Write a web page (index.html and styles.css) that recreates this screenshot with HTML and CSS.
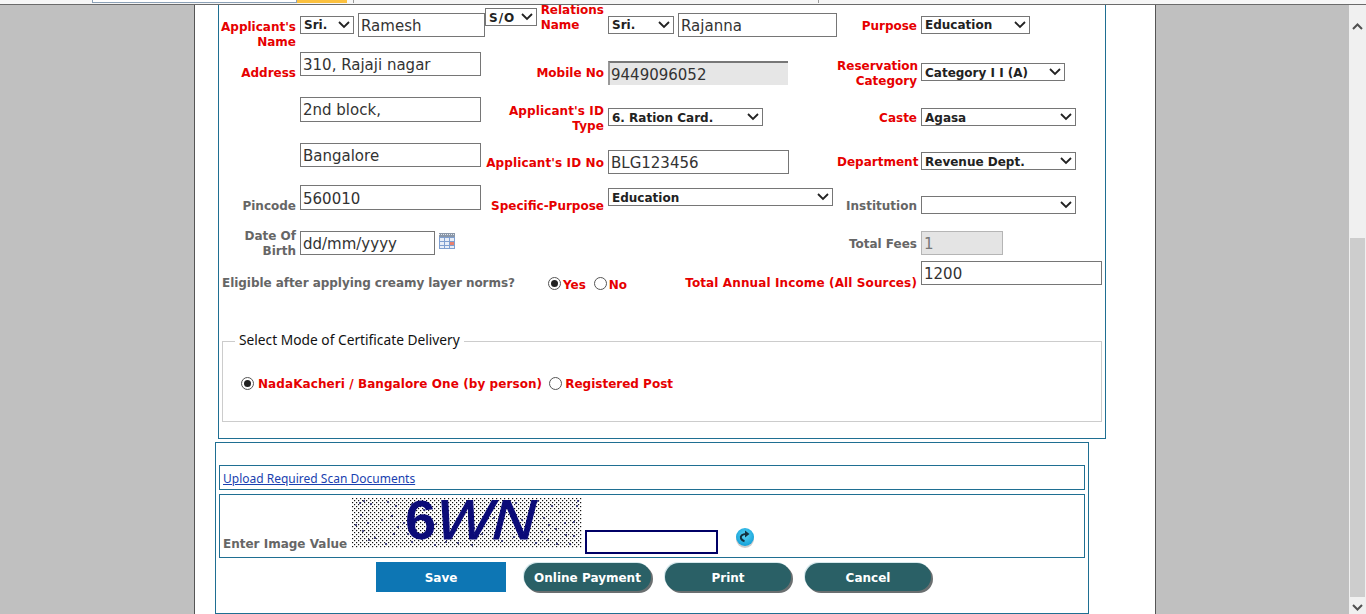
FILE: index.html
```html
<!DOCTYPE html>
<html lang="en">
<head>
<meta charset="utf-8">
<title>Application Form</title>
<link rel="stylesheet" href="styles.css">
</head>
<body>
<div class="strip">
  <span class="strip-field"></span>
  <span class="strip-tab"></span>
  <span class="strip-tick first"></span>
  <span class="strip-tick second"></span>
</div>
<div class="app">
  <div class="canvas">
    <div class="page">
      <form class="main-box">
        <div class="grid">
          <div class="lab t19">Applicant's Name</div>
          <div class="span-name">
            <select class="sel t16 w54"><option>Sri.</option></select>
            <input class="inp t13 w127 ml4" value="Ramesh">
            <select class="sel t8 w52 so"><option>S/O</option></select>
            <div class="lab t2 push left">Relations<br>Name</div>
          </div>
          <div class="flexcell">
            <select class="sel t16 w66"><option>Sri.</option></select>
            <input class="inp t13 w159 ml4" value="Rajanna">
          </div>
          <div class="lab t18">Purpose</div>
          <div><select class="sel t16 w109"><option>Education</option></select></div>

          <div class="lab t15">Address</div>
          <div><input class="inp t2 w181" value="310, Rajaji nagar"></div>
          <div class="lab t15">Mobile No</div>
          <div><input class="inp t11 w180 ro" value="9449096052" readonly></div>
          <div class="lab t8">Reservation Category</div>
          <div><select class="sel t13 w144"><option>Category I I (A)</option></select></div>

          <div></div>
          <div><input class="inp t2 w181 h25 snug" value="2nd block,"></div>
          <div class="lab t8 wide">Applicant's ID Type</div>
          <div><select class="sel t13 w155"><option>6. Ration Card.</option></select></div>
          <div class="lab t15">Caste</div>
          <div><select class="sel t13 w155"><option>Agasa</option></select></div>

          <div></div>
          <div><input class="inp t2 w181" value="Bangalore"></div>
          <div class="lab t14 wide">Applicant's ID No</div>
          <div><input class="inp t9 w181" value="BLG123456"></div>
          <div class="lab t13">Department</div>
          <div><select class="sel t11 w155"><option>Revenue Dept.</option></select></div>

          <div class="lab grey t14">Pincode</div>
          <div><input class="inp t1 w181 h25" value="560010"></div>
          <div class="lab t14">Specific-Purpose</div>
          <div><select class="sel t4 w225"><option>Education</option></select></div>
          <div class="lab grey t14">Institution</div>
          <div><select class="sel t12 w155"><option></option></select></div>

          <div class="lab grey dob">Date Of Birth</div>
          <div class="flexcell">
            <input class="inp t2 w135" value="dd/mm/yyyy">
            <svg class="cal" width="16" height="16" viewBox="0 0 16 16" aria-hidden="true">
              <rect x="0" y="0" width="16" height="16" fill="#e8eef8"/>
              <rect x="0" y="0" width="16" height="4" fill="#8a97a8"/>
              <path d="M0 1.5h16" stroke="#e4e8ee" stroke-dasharray="1 1"/>
              <path d="M.5 4v12M5.5 4v12M10.5 4v12M15.5 4v12M0 4.5h16M0 8.5h16M0 12.5h16M0 15.5h16" stroke="#7f9fd0" fill="none"/>
              <rect x="11" y="9" width="4" height="3" fill="#e8806e"/>
            </svg>
          </div>
          <div></div>
          <div></div>
          <div class="lab grey t7">Total Fees</div>
          <div><input class="inp t2 w82 fee" value="1" disabled></div>

          <div class="span-all">
            <div class="lab grey eligible t16">Eligible after applying creamy layer norms?</div>
            <input class="rad t18 r-yes" type="radio" name="creamy" checked>
            <span class="lab t18 opt">Yes</span>
            <input class="rad t18 r-no" type="radio" name="creamy">
            <span class="lab t18 opt">No</span>
            <div class="lab t16 push total">Total Annual Income (All Sources)</div>
            <input class="inp t2 w181" value="1200">
          </div>
        </div>

        <fieldset class="delivery">
          <legend>Select Mode of Certificate Delivery</legend>
          <div class="delivery-row">
            <input class="rad" type="radio" name="mode" checked>
            <span class="lab opt nada">NadaKacheri / Bangalore One (by person)</span>
            <input class="rad r-post" type="radio" name="mode">
            <span class="lab opt">Registered Post</span>
          </div>
        </fieldset>
      </form>

      <div class="second-box">
        <div class="upload"><a href="#">Upload Required Scan Documents</a></div>
        <div class="captcha">
          <span class="lab grey cap-label">Enter Image Value</span>
          <svg class="cap-img" width="230" height="50" viewBox="0 0 230 50" role="img">
            <defs>
              <pattern id="dots" width="4" height="4" patternUnits="userSpaceOnUse">
                <rect width="1.2" height="1.2" fill="#111"/>
                <rect x="2" y="2" width="1.2" height="1.2" fill="#111"/>
              </pattern>
            </defs>
            <rect width="230" height="50" fill="#fff"/>
            <rect width="230" height="50" fill="url(#dots)"/>
            <path d="M8 5h.01M12 3h.01M19 6h.01M36 4h.01M44 8h.01M9 17h.01M16 25h.01M4 27h.01M30 22h.01M40 18h.01M46 29h.01M52 25h.01M42 36h.01M17 42h.01M23 40h.01M11 33h.01M34 46h.01M60 44h.01M70 41h.01M83 47h.01M94 44h.01M106 45h.01M120 47h.01M150 43h.01M162 39h.01M173 36h.01M184 45h.01M190 34h.01M197 27h.01M204 31h.01M213 25h.01M222 24h.01M226 3h.01M225 8h.01M208 14h.01M200 8h.01M186 3h.01M178 14h.01M170 22h.01M164 5h.01M192 20h.01M222 38h.01M218 46h.01M205 46h.01M196 42h.01M214 37h.01M56 36h.01M64 32h.01M78 19h.01M84 26h.01M72 12h.01M60 6h.01M122 30h.01M142 20h.01M130 36h.01" stroke="#23236e" stroke-width="2" stroke-linecap="round" fill="none"/>
            <text class="cap-six" x="53" y="41">6</text>
            <text class="cap-wn" transform="translate(80 41) skewX(-14)" textLength="100" lengthAdjust="spacingAndGlyphs">WN</text>
          </svg>
          <input class="cap-input" aria-label="Enter Image Value">
          <svg class="refresh" width="20" height="22" viewBox="0 0 20 22" aria-hidden="true">
            <defs>
              <radialGradient id="ball" cx="50%" cy="40%" r="60%">
                <stop offset="0" stop-color="#5bd4f5"/>
                <stop offset="1" stop-color="#12a0d8"/>
              </radialGradient>
            </defs>
            <ellipse cx="10" cy="12" rx="9" ry="9" fill="#9a9a9a" opacity=".5"/>
            <circle cx="10" cy="10" r="9" fill="url(#ball)"/>
            <path d="M11 7C7.5 7 5 9 6 11.5c.6 1.3 2 2.3 3.5 2.7" fill="none" stroke="#14303f" stroke-width="2"/>
            <path d="M14.5 7L10 3.5v7z" fill="#14303f"/>
          </svg>
        </div>
        <div class="actions">
          <button type="button" class="btn-save">Save</button>
          <button type="button" class="btn-round pay">Online Payment</button>
          <button type="button" class="btn-round">Print</button>
          <button type="button" class="btn-round">Cancel</button>
        </div>
      </div>
    </div>
  </div>
  <div class="scrollbar">
    <svg class="arrow up" width="11" height="7" viewBox="0 0 11 7" aria-hidden="true"><path d="M1 6l4.5-4.5L10 6" fill="none" stroke="#505050" stroke-width="2"/></svg>
    <div class="thumb"></div>
    <svg class="arrow down" width="11" height="7" viewBox="0 0 11 7" aria-hidden="true"><path d="M1 1l4.5 4.5L10 1" fill="none" stroke="#505050" stroke-width="2"/></svg>
  </div>
</div>
</body>
</html>
```
FILE: styles.css
```css
* { box-sizing: border-box; }
html, body { margin: 0; height: 100%; overflow: hidden; }
body { font-family: "DejaVu Sans", Verdana, sans-serif; background: #c0c0c0; }

.strip {
  position: absolute; top: 0; left: 0; right: 0; height: 5px;
  background: #f6f6f6; border-bottom: 1px solid #6b6b6b;
  display: flex; align-items: flex-start; z-index: 2;
}
.strip-field { margin-left: 92px; width: 205px; height: 3px; background: #fff; border: 1px solid #8da2b8; border-top: 0; }
.strip-tab { width: 50px; height: 3px; background: #fcc13f; }
.strip-tick { width: 1px; height: 3px; background: #9a9a9a; }
.strip-tick.first { margin-left: 6px; }
.strip-tick.second { margin-left: 464px; }

.app { display: flex; height: 614px; }
.canvas { flex: 1; padding-left: 194px; overflow: hidden; }
.page {
  width: 962px; height: 614px; background: #fff;
  border-left: 1px solid #555; border-right: 1px solid #555;
  display: flex; flex-direction: column; padding-left: 20px;
}

.main-box {
  margin-left: 3px; width: 888px; height: 439px; flex: none;
  border: 1px solid #1f6f92; border-top: 0; padding-right: 3px;
}
.grid {
  display: grid;
  grid-template-columns: 77px 181px 119px 225px 80px 181px;
  grid-template-rows: 50px 45px 46px 43px 45px 30px 41px;
  column-gap: 4px;
  align-items: start;
}
.span-name { grid-column: 2 / 4; display: flex; align-items: flex-start; min-width: 0; }
.flexcell { display: flex; align-items: flex-start; }
.flexcell > *, .span-name > *, .span-all > * { flex: none; }
.span-all { grid-column: 1 / -1; display: flex; align-items: flex-start; }
.push { margin-left: auto; }

.lab {
  font: bold 12px/15px "DejaVu Sans", Verdana, sans-serif;
  color: #e60000; text-align: right; padding-top: 1px;
}
.left { text-align: left; }
.dob { padding-top: 0; }
.grey { color: #666; }
.wide { letter-spacing: .1px; }
.eligible { margin-left: 3px; text-align: left; white-space: nowrap; letter-spacing: -.05px; }
.opt { white-space: nowrap; }
.nada { letter-spacing: .08px; }
.total { margin-right: 4px; white-space: nowrap; letter-spacing: .12px; }

.inp {
  display: block; height: 24px; padding: 2px 2px 0;
  font: 15px "DejaVu Sans", Verdana, sans-serif; color: #333;
  border: 1px solid #767676; background: #fff; border-radius: 0; outline: 0;
}
.h25 { height: 25px; }
.inp.snug { padding-top: 0; }
.inp.ro { background: #e6e6e6; border: 0; border-top: 2px solid #777; border-left: 2px solid #999; padding: 1px 1px 0; }
.inp.fee { background: #e4e4e4; border-color: #b5b5b5; color: #777; }

.sel {
  display: block; height: 18px; padding: 1px 14px 0 3px;
  font: bold 12px "DejaVu Sans", Verdana, sans-serif; color: #222;
  border: 1px solid #767676; border-radius: 0; outline: 0;
  appearance: none; -webkit-appearance: none;
  background: #fff url("data:image/svg+xml,%3Csvg xmlns='http://www.w3.org/2000/svg' width='12' height='8'%3E%3Cpath d='M1 1l5 5 5-5' fill='none' stroke='%23222' stroke-width='1.8'/%3E%3C/svg%3E") no-repeat right 3px center;
}
.sel.t16 { padding-top: 0; }
.so { letter-spacing: 1px; }

.w52 { width: 52px; } .w54 { width: 54px; } .w66 { width: 66px; } .w82 { width: 82px; }
.w109 { width: 109px; } .w127 { width: 127px; } .w135 { width: 135px; } .w144 { width: 144px; }
.w155 { width: 155px; } .w159 { width: 159px; } .w180 { width: 180px; } .w181 { width: 181px; }
.w225 { width: 225px; }
.ml4 { margin-left: 4px; }

.t1 { margin-top: 1px; } .t2 { margin-top: 2px; }
.t4 { margin-top: 4px; } .t7 { margin-top: 7px; } .t8 { margin-top: 8px; } .t9 { margin-top: 9px; }
.t11 { margin-top: 11px; } .t12 { margin-top: 12px; } .t13 { margin-top: 13px; } .t14 { margin-top: 14px; }
.t15 { margin-top: 15px; } .t16 { margin-top: 16px; } .t18 { margin-top: 18px; } .t19 { margin-top: 19px; }

.cal { margin: 4px 0 0 4px; }

.rad {
  appearance: none; -webkit-appearance: none;
  width: 13px; height: 13px; margin: 0 2px 0 0; flex: none;
  border: 1px solid #555; border-radius: 50%; background: #fff;
  display: grid; place-items: center;
}
.rad:checked::before { content: ""; width: 7px; height: 7px; border-radius: 50%; background: #222; }
.span-all .rad { margin-top: 18px; }
.r-yes { margin-left: 33px; }
.r-no { margin-left: 8px; }

.delivery {
  margin: 32px 0 0 3px; width: 880px; height: 90px;
  border: 1px solid #ccc; padding: 0 0 0 18px;
}
.delivery legend {
  margin-left: -6px; padding: 0 4px 4px;
  font: 13.75px/15px "Noto Sans", Tahoma, sans-serif; color: #111;
}
.delivery-row { display: flex; align-items: center; margin-top: 23px; }
.delivery-row .lab { margin-top: 2px; }
.delivery-row .rad { margin-right: 4px; }
.delivery-row .r-post { margin-left: 7px; margin-right: 3px; }

.second-box {
  margin-top: 3px; width: 874px; height: 172px; flex: none;
  border: 1px solid #1f6f92; padding: 22px 3px 0;
}
.upload {
  height: 25px; border: 1px solid #1f6f92; padding-left: 3px;
  font: 12px/25px "Noto Sans", Tahoma, sans-serif;
}
.upload a { color: #1a3fb0; }
.captcha {
  margin-top: 4px; height: 64px; border: 1px solid #1f6f92;
  display: flex; align-items: flex-start; padding-left: 3px;
}
.cap-label { margin-top: 41px; white-space: nowrap; width: 129px; text-align: left; }
.cap-img { margin-top: 3px; flex: none; }
.cap-six { font: bold 56px "Liberation Sans", Arial, sans-serif; fill: #0b0b78; }
.cap-wn { font: 56px "Liberation Sans", Arial, sans-serif; fill: #0b0b78; stroke: #0b0b78; stroke-width: 1px; }
.cap-input { margin: 35px 0 0 3px; width: 133px; height: 24px; border: 2px solid #000066; background: #fff; outline: 0; border-radius: 0; flex: none; }
.refresh { margin: 32px 0 0 17px; flex: none; }

.actions { display: flex; align-items: flex-start; margin-top: 4px; padding-left: 157px; }
.btn-save {
  width: 130px; height: 30px; border: 0; padding: 1px 0 0; background: #0d76b4; color: #fff;
  font: bold 12px "DejaVu Sans", Verdana, sans-serif; border-radius: 0;
}
.btn-round {
  width: 126px; height: 28px; margin: 1px 0 0 14px; border: 0; padding: 2px 0 0;
  background: #2a6066; color: #fff; border-radius: 14px;
  font: bold 12px "DejaVu Sans", Verdana, sans-serif;
  box-shadow: 2px 2px 0 #6a6f70, -1px -1px 0 #d5e8ec;
}
.pay { margin-left: 18px; width: 127px; }

.scrollbar {
  width: 17px; flex: none; background: #f0f0f0;
  display: flex; flex-direction: column; align-items: center; padding-top: 23px;
}
.thumb { width: 15px; height: 359px; margin-top: 208px; background: #cdcdcd; flex: none; }
.arrow { flex: none; }
.arrow.down { margin-top: 7px; }
```
